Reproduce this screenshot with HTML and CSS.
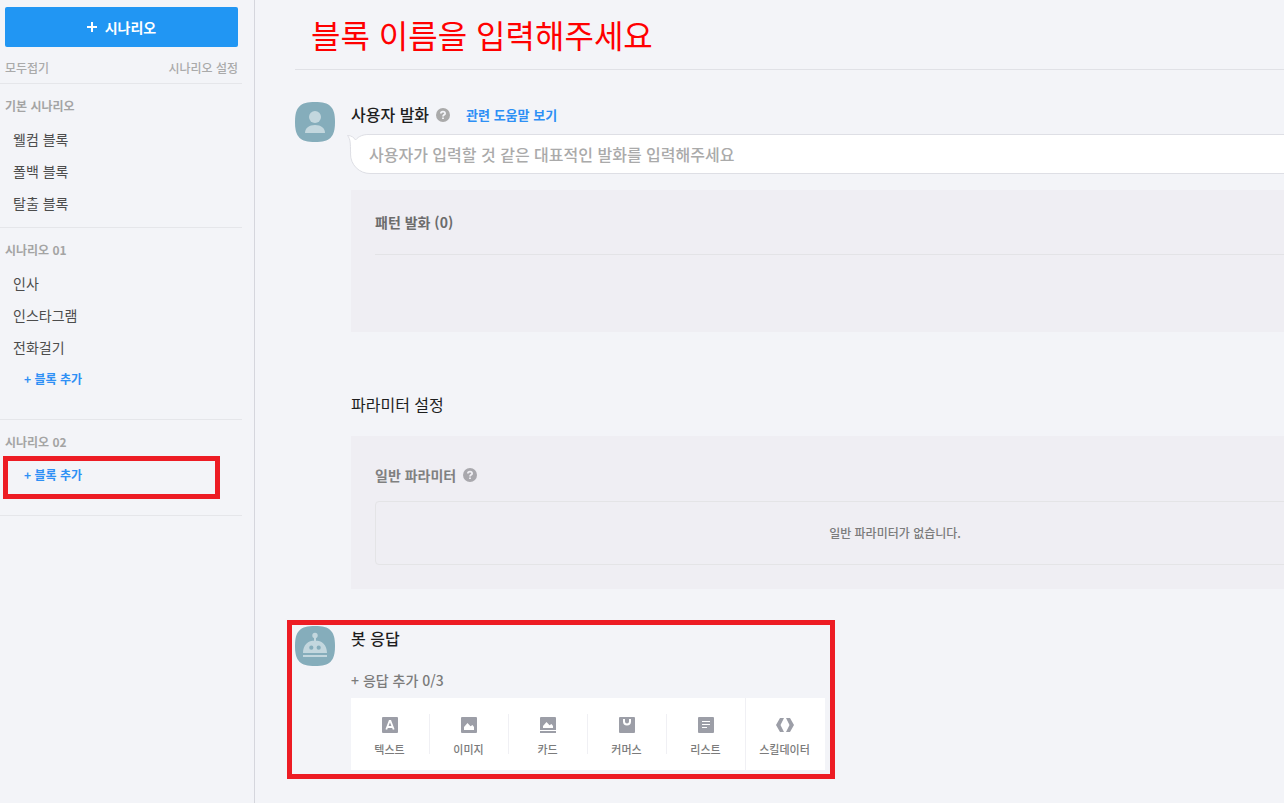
FILE: index.html
```html
<!DOCTYPE html>
<html lang="ko">
<head>
<meta charset="utf-8">
<title>시나리오</title>
<link rel="stylesheet" href="styles.css">
</head>
<body>
<div class="app">
  <aside class="sidebar">
    <div class="sidebar-top">
      <button class="add-scenario" type="button">
        <svg width="10" height="10" viewBox="0 0 10 10" aria-hidden="true"><path d="M4 0h2v4h4v2H6v4H4V6H0V4h4z" fill="currentColor"/></svg>
        시나리오
      </button>
      <div class="sidebar-tools">
        <button type="button">모두접기</button>
        <button type="button">시나리오 설정</button>
      </div>
    </div>
    <section class="group">
      <h2>기본 시나리오</h2>
      <a class="block-link" href="#">웰컴 블록</a>
      <a class="block-link" href="#">폴백 블록</a>
      <a class="block-link" href="#">탈출 블록</a>
    </section>
    <section class="group group-custom">
      <h2>시나리오 01</h2>
      <a class="block-link" href="#">인사</a>
      <a class="block-link" href="#">인스타그램</a>
      <a class="block-link" href="#">전화걸기</a>
      <button class="add-block" type="button">+ 블록 추가</button>
    </section>
    <section class="group group-custom">
      <h2>시나리오 02</h2>
      <div class="marked">
        <button class="add-block" type="button">+ 블록 추가</button>
        <span class="marker marker-add"></span>
      </div>
    </section>
  </aside>

  <main class="main">
    <div class="content">
      <header class="title-bar">
        <input class="block-title" type="text" aria-label="블록 이름" placeholder="블록 이름을 입력해주세요">
      </header>

      <section class="row">
        <svg class="avatar" viewBox="0 0 40 40" aria-hidden="true">
          <path d="M20 0C35 0 40 5 40 20S35 40 20 40 0 35 0 20 5 0 20 0z" fill="#85adbb"/>
          <circle cx="20" cy="15" r="6" fill="#c3d7de"/>
          <path d="M10 31c0-5 4-8 10-8s10 3 10 8z" fill="#c3d7de"/>
        </svg>
        <div class="row-body">
          <div class="heading">
            <h2>사용자 발화</h2>
            <svg class="help" viewBox="0 0 14 14" aria-hidden="true"><circle cx="7" cy="7" r="7" fill="#aaa"/><path d="M4.900 5.500c0-2.500 4.200-2.500 4.200-.1C9.100 6.900 7 6.800 7 8.600M7 9.600v1.500" fill="none" stroke="#f3f4f8" stroke-width="1.800"/></svg>
            <a class="help-link" href="#">관련 도움말 보기</a>
          </div>
          <div class="bubble">
            <input type="text" aria-label="사용자 발화" placeholder="사용자가 입력할 것 같은 대표적인 발화를 입력해주세요">
            <svg class="tail" width="22" height="18" viewBox="0 0 22 18" aria-hidden="true"><path d="M3.500 18C3.500 10 3.500 5 .500 1.500c4 0 6.500 2 8 4.500C12 2 16 .500 22 .500V18z" fill="#fff"/><path d="M3.500 18C3.500 10 3.500 5 .500 1.500c4 0 6.500 2 8 4.500C12 2 16 .500 22 .500" fill="none" stroke="#dedfe5"/></svg>
          </div>
          <div class="panel pattern">
            <h3>패턴 발화 (0)</h3>
          </div>
          <h2 class="param-title">파라미터 설정</h2>
          <div class="panel params">
            <div class="heading">
              <h3>일반 파라미터</h3>
              <svg class="help" viewBox="0 0 14 14" aria-hidden="true"><circle cx="7" cy="7" r="7" fill="#a9a8ad"/><path d="M4.900 5.500c0-2.500 4.200-2.500 4.200-.1C9.100 6.900 7 6.800 7 8.600M7 9.600v1.500" fill="none" stroke="#efeef3" stroke-width="1.800"/></svg>
            </div>
            <p class="empty">일반 파라미터가 없습니다.</p>
          </div>
        </div>
      </section>

      <section class="row bot">
        <svg class="avatar" viewBox="0 0 40 40" aria-hidden="true">
          <path d="M20 0C35 0 40 5 40 20S35 40 20 40 0 35 0 20 5 0 20 0z" fill="#85adbb"/>
          <circle cx="20" cy="9.500" r="2.700" fill="#c3d7de"/>
          <path d="M19 11h2v4h-2zM8 29h24v2H8zM8 27c0-8 5-12.500 12-12.500S32 19 32 27z" fill="#c3d7de"/>
          <circle cx="16.300" cy="21.700" r="2.100" fill="#85adbb"/><circle cx="23.700" cy="21.700" r="2.100" fill="#85adbb"/>
        </svg>
        <div class="row-body">
          <div class="heading"><h2>봇 응답</h2></div>
          <p class="answer-count">+ 응답 추가 0/3</p>
          <div class="tiles">
            <button class="tile" type="button">
              <svg viewBox="0 0 18 18" aria-hidden="true"><rect x="1" y="1" width="16" height="16" rx="1" fill="#9c9ea7"/><path d="M5.300 13.500L8.600 5h.8l3.300 8.500M6.500 11h5" fill="none" stroke="#fff" stroke-width="1.800"/></svg>
              텍스트
            </button>
            <button class="tile" type="button">
              <svg viewBox="0 0 18 18" aria-hidden="true"><rect x="1" y="1" width="16" height="16" rx="1" fill="#9c9ea7"/><path d="M4 14v-3l3.500-4 3 3.200L12.500 9l1.500 2v3z" fill="#fff"/></svg>
              이미지
            </button>
            <button class="tile" type="button">
              <svg viewBox="0 0 18 18" aria-hidden="true"><path d="M2 1h14q1 0 1 1v12H1V2q0-1 1-1zM1 15h16v2H1z" fill="#9c9ea7"/><path d="M4 12v-2l3.500-4 3 3.200L12.500 8l1.500 2v2z" fill="#fff"/></svg>
              카드
            </button>
            <button class="tile" type="button">
              <svg viewBox="0 0 18 18" aria-hidden="true"><rect x="1" y="1" width="16" height="16" rx="1" fill="#9c9ea7"/><path d="M6 3v2.500a3 3 0 0 0 6 0V3" fill="none" stroke="#fff" stroke-width="2"/></svg>
              커머스
            </button>
            <button class="tile" type="button">
              <svg viewBox="0 0 18 18" aria-hidden="true"><rect x="1" y="1" width="16" height="16" rx="1" fill="#9c9ea7"/><path d="M5 5.500h8M5 8.500h8M5 11.500h5" stroke="#fff"/></svg>
              리스트
            </button>
            <button class="tile tile-skill" type="button">
              <svg viewBox="0 0 18 18" aria-hidden="true"><path d="M4 2h4L4.500 9 8 16H4L0 9zM14 2h-4l3.500 7-3.500 7h4l4-7z" fill="#9c9ea7"/></svg>
              스킬데이터
            </button>
          </div>
        </div>
        <span class="marker marker-bot"></span>
      </section>
    </div>
  </main>
</div>
</body>
</html>
```

FILE: styles.css
```css
* {
  box-sizing: border-box;
}

body {
  margin: 0;
  background: #f3f4f8;
  color: #1e1e1e;
  font-family: "Noto Sans CJK KR", sans-serif;
  font-size: 14px;
  line-height: 20px;
}

h2,
h3,
p {
  margin: 0;
}

a {
  text-decoration: none;
}

button,
input {
  margin: 0;
  padding: 0;
  border: 0;
  background: none;
  font: inherit;
}

button {
  cursor: pointer;
}

.app {
  display: flex;
  min-height: 100vh;
}

/* Sidebar */
.sidebar {
  flex: 0 0 255px;
  padding: 7px 12px 0 0;
  border-right: 1px solid #d5d6dd;
}

.sidebar-top {
  padding: 0 4px 0 5px;
  border-bottom: 1px solid #e5e6ea;
}

.add-scenario {
  display: flex;
  align-items: center;
  justify-content: center;
  gap: 8px;
  width: 100%;
  height: 40px;
  border-radius: 2px;
  background: #2196f3;
  color: #fff;
  font-weight: 700;
}

.sidebar-tools {
  display: flex;
  justify-content: space-between;
  padding: 11px 0 5px;
  font-size: 12px;
  color: #aaa;
}

.sidebar-tools button {
  color: inherit;
  font-weight: 500;
}

.group {
  padding: 4px 0 8px;
  border-bottom: 1px solid #e5e6ea;
}

.group-custom {
  padding-bottom: 24px;
}

.group h2 {
  padding-left: 5px;
  color: #a4a4a4;
  font-size: 12px;
  font-weight: 700;
  line-height: 35px;
}

.block-link {
  display: block;
  padding-left: 13px;
  color: #4c4c4c;
  line-height: 32px;
}

.add-block {
  display: block;
  width: 100%;
  padding-left: 24px;
  color: #2e90f5;
  font-size: 12px;
  font-weight: 700;
  line-height: 32px;
  text-align: left;
}

.marked {
  position: relative;
}

/* Red call-out frames */
.marker {
  position: absolute;
  border: 5px solid #ed1c24;
  pointer-events: none;
}

.marker-add {
  inset: -3px 22px -8px 3px;
}

.marker-bot {
  top: -6px;
  bottom: -9px;
  left: -8px;
  width: 548px;
}

/* Editor */
.main {
  flex: 1;
  min-width: 0;
  padding: 0 0 32px 40px;
  overflow: hidden;
}

.content {
  min-width: 1144px;
}

.title-bar {
  padding: 6px 16px 7px;
  border-bottom: 1px solid #e0e1e6;
}

.block-title {
  display: block;
  width: 100%;
  height: 56px;
  font-size: 32px;
}

.block-title::placeholder {
  color: #f00;
  opacity: 1;
}

.row {
  position: relative;
  display: flex;
  gap: 16px;
  padding-top: 32px;
}

.row.bot {
  margin-top: 37px;
  padding-top: 0;
}

.avatar {
  flex: none;
  width: 40px;
  height: 40px;
}

.row-body {
  flex: 1;
  min-width: 0;
}

.heading {
  display: flex;
  align-items: center;
}

.heading h2,
.param-title {
  font-size: 16px;
  font-weight: 500;
  line-height: 25px;
}

.help {
  width: 14px;
  height: 14px;
  margin-left: 7px;
}

.help-link {
  margin-left: 16px;
  color: #2e90f5;
  font-size: 13px;
  font-weight: 700;
}

.bubble {
  position: relative;
  margin: 7px 0 0 -1px;
}

.bubble input {
  display: block;
  width: 100%;
  height: 40px;
  padding: 0 18px;
  border: 1px solid #dedfe5;
  border-radius: 20px;
  background: #fff;
  font-size: 16px;
}

.bubble input::placeholder {
  color: #aaa;
  font-weight: 500;
  opacity: 1;
}

.tail {
  position: absolute;
  top: 0;
  left: -3px;
}

.panel {
  padding: 0 24px 24px;
  background: #efeef3;
}

.panel h3 {
  font-size: 14px;
  font-weight: 700;
}

.pattern {
  min-height: 142px;
  margin-top: 16px;
}

.pattern h3 {
  padding: 22px 0;
  border-bottom: 1px solid #e3e3e6;
  color: #6c6c6c;
}

.param-title {
  margin-top: 60px;
  font-weight: 400;
}

.params {
  margin-top: 19px;
  padding-top: 29px;
}

.params h3 {
  color: #808080;
}

.empty {
  margin-top: 16px;
  padding: 21px;
  border: 1px solid #e4e4e6;
  border-radius: 4px;
  color: #7b7b7b;
  font-size: 12px;
  font-weight: 500;
  text-align: center;
}

.answer-count {
  margin-top: 19px;
  color: #7b7b7b;
  font-weight: 500;
}

.tiles {
  display: inline-flex;
  margin-top: 8px;
  background: #fff;
  vertical-align: top;
}

.tile {
  position: relative;
  display: flex;
  flex-direction: column;
  align-items: center;
  gap: 7px;
  width: 79px;
  height: 72px;
  padding: 18px 2px 0 0;
  color: #7b7b7b;
  font-size: 11px;
  font-weight: 500;
  line-height: 16px;
}

.tile svg {
  width: 18px;
  height: 18px;
}

.tile + .tile::before {
  content: "";
  position: absolute;
  top: 16px;
  bottom: 16px;
  left: -1px;
  width: 1px;
  background: #f0f0f4;
}

.tile + .tile-skill::before {
  top: 0;
  bottom: 0;
}
```
